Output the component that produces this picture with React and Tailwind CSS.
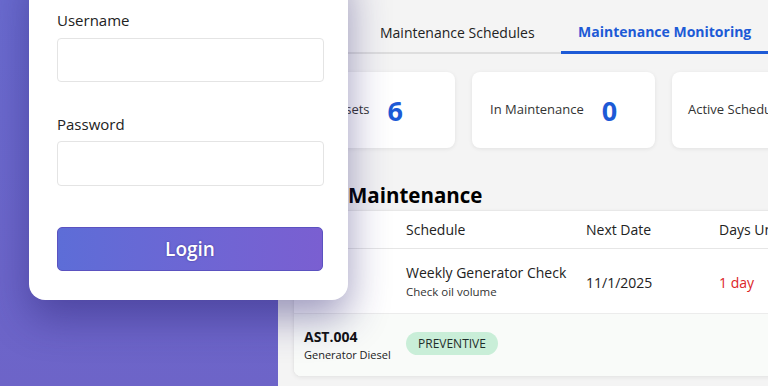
import React from 'react';

const font = { fontFamily: '"Open Sans", "Noto Sans", sans-serif' };

function StatCard({ label, value, className, justify }) {
  return (
    <div className={`h-[76px] bg-white rounded-lg shadow-[0_1px_4px_rgba(0,0,0,0.08)] flex items-center shrink-0 overflow-hidden ${className}`}>
      <div className={`flex items-center gap-[18px] whitespace-nowrap ${justify}`}>
        <span className="text-[13px] text-[#333]">{label}</span>
        {value !== undefined && <span className="text-[27px] font-bold text-[#1d5ad6] leading-none">{value}</span>}
      </div>
    </div>
  );
}

function LoginCard() {
  return (
    <div className="absolute left-[29px] top-[-40px] w-[319px] h-[340px] bg-white rounded-[16px] shadow-[0_18px_40px_rgba(40,30,110,0.45)] px-[28px] pt-[49px]">
      <label className="block text-[15px] text-[#222] leading-[22px]">Username</label>
      <div className="mt-[7px] h-[44px] w-[267px] border border-[#e4e4e4] rounded-[4px] bg-white" />
      <label className="block mt-[31px] text-[15px] text-[#222] leading-[22px]">Password</label>
      <div className="mt-[6px] h-[45px] w-[267px] border border-[#e4e4e4] rounded-[4px] bg-white" />
      <button className="mt-[41px] h-[44px] w-[266px] rounded-[5px] border border-[#5b52c0] bg-gradient-to-r from-[#5d6dd7] to-[#7a5fd1] text-white text-[19px] font-semibold [text-shadow:0_0_2px_rgba(40,30,120,0.7)]">
        Login
      </button>
    </div>
  );
}

export default function App() {
  return (
    <div className="relative w-[768px] h-[386px] overflow-hidden flex" style={font}>
      {/* purple backdrop */}
      <div className="w-[278px] shrink-0 bg-gradient-to-b from-[#6a6bcf] to-[#6d64c8]" />

      {/* dashboard page */}
      <div className="flex-1 bg-[#f4f4f4] pl-[15px] overflow-hidden">
        {/* tabs */}
        <div className="flex items-end h-[54px] border-b-2 border-[#dedede] w-[600px]">
          <div className="w-[65px]" />
          <div className="w-[203px] pl-[22px] pb-[9px] text-[14px] leading-[20px] text-[#222] whitespace-nowrap">Maintenance Schedules</div>
          <div className="w-[211px] -mb-[2px] pl-[17px] pb-[9px] border-b-[3px] border-[#1d5ad6] text-[14px] leading-[20px] font-bold text-[#1d5ad6] whitespace-nowrap">Maintenance Monitoring</div>
        </div>

        {/* stats */}
        <div className="flex gap-[17px] mt-[18px]">
          <StatCard label="Total Assets" value="6" className="w-[162px] justify-end" justify="pr-[52px]" />
          <StatCard label="In Maintenance" value="0" className="w-[183px]" justify="pl-[18px]" />
          <StatCard label="Active Schedules" value="1" className="w-[183px]" justify="pl-[16px]" />
        </div>

        {/* heading */}
        <h2 className="mt-[33px] h-[29px] text-[20.5px] font-bold text-black leading-[29px] whitespace-nowrap flex">
          <span className="w-[55px] overflow-hidden inline-block" />
          <span>Maintenance</span>
        </h2>

        {/* table */}
        <div className="w-[490px] bg-white rounded-lg border border-[#e8e8e8] shadow-[0_1px_4px_rgba(0,0,0,0.06)] overflow-hidden">
          <div className="grid grid-cols-[102px_180px_133px_1fr] pl-[10px] h-[38px] items-center border-b border-[#e6e6e6] text-[14px] text-[#222] whitespace-nowrap">
            <div>Asset</div>
            <div>Schedule</div>
            <div>Next Date</div>
            <div>Days Until</div>
          </div>
          <div className="grid grid-cols-[102px_180px_133px_1fr] pl-[10px] h-[65px] items-center border-b border-[#ececec] whitespace-nowrap">
            <div />
            <div>
              <div className="text-[14px] text-[#222] leading-[20px]">Weekly Generator Check</div>
              <div className="text-[11.5px] text-[#333] leading-[17px]">Check oil volume</div>
            </div>
            <div className="text-[14px] text-[#222] pt-[2px]">11/1/2025</div>
            <div className="text-[14px] text-[#dc2626] pt-[2px]">1 day</div>
          </div>
          <div className="grid grid-cols-[102px_180px_133px_1fr] pl-[10px] h-[62px] bg-[#f9fbf9] whitespace-nowrap">
            <div className="pt-[13px]">
              <div className="text-[14px] font-bold text-[#111] leading-[19px]">AST.004</div>
              <div className="text-[11px] text-[#222] leading-[17px]">Generator Diesel</div>
            </div>
            <div className="pt-[16px]">
              <span className="inline-block rounded-full bg-[#c9eed8] px-[12px] h-[23px] leading-[23px] text-[12px] text-[#1f2d2a]">PREVENTIVE</span>
            </div>
            <div />
            <div />
          </div>
        </div>
      </div>

      <LoginCard />
    </div>
  );
}
